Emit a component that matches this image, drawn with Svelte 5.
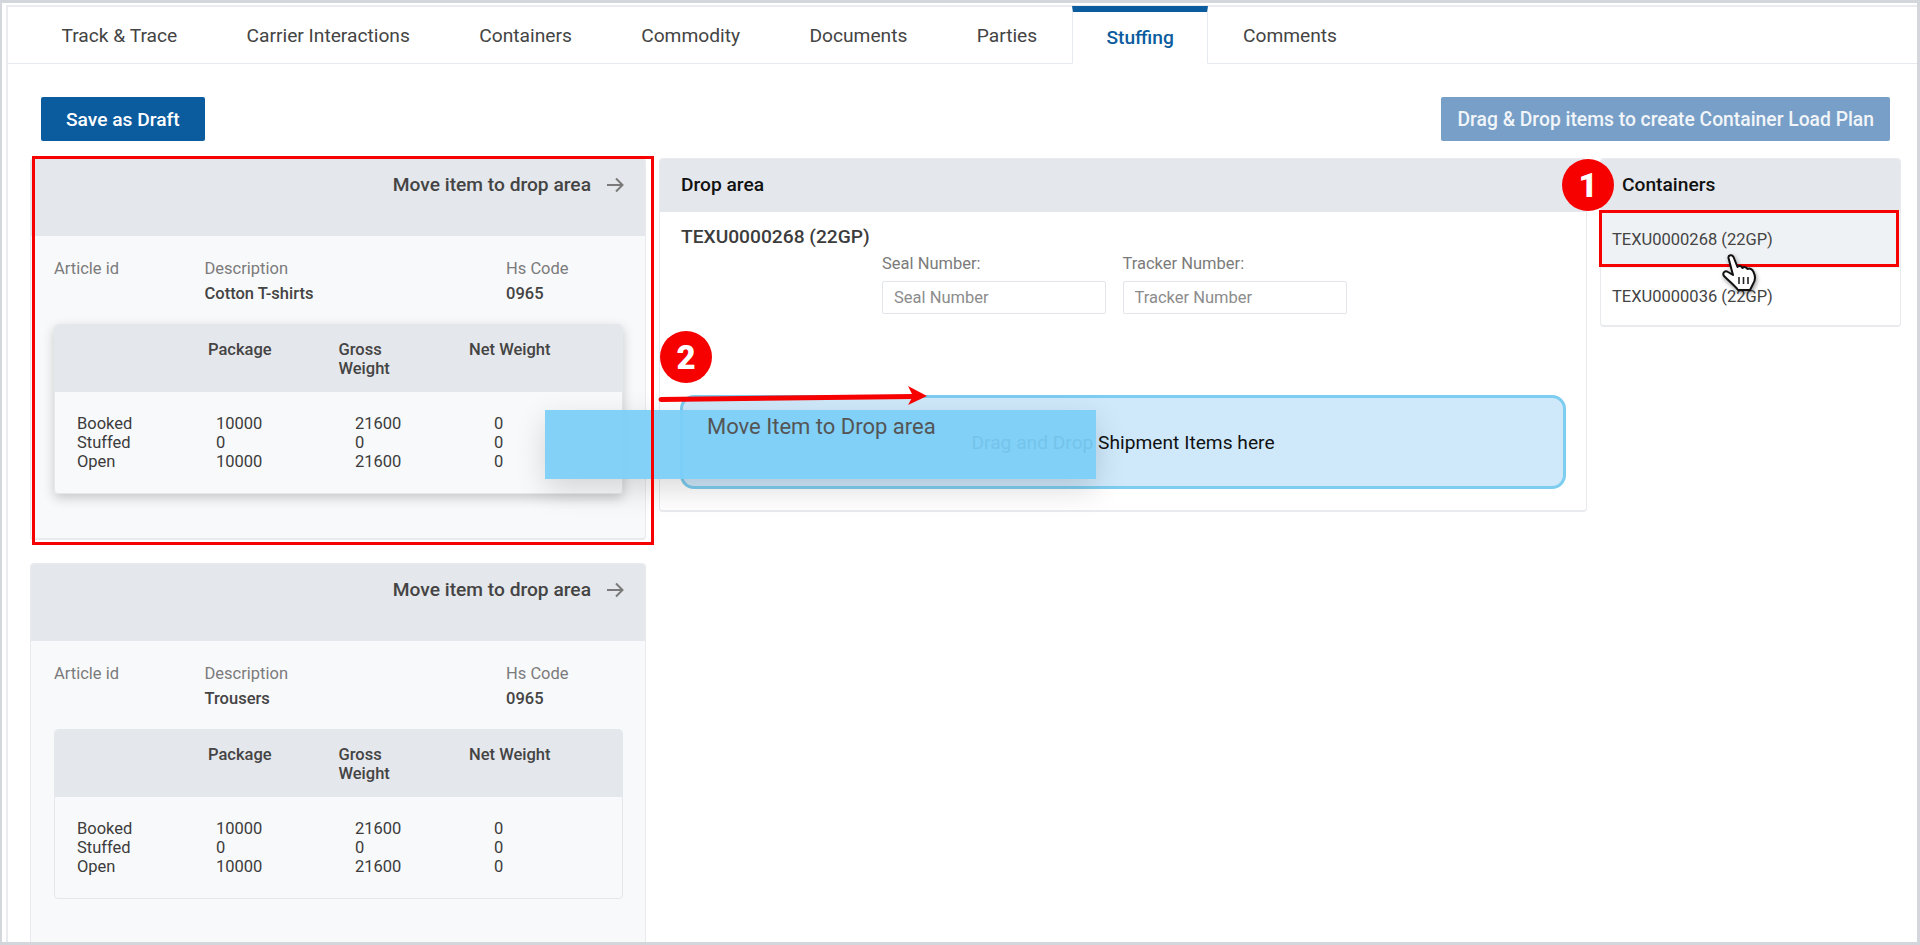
<script>
  const tabs = ['Track & Trace', 'Carrier Interactions', 'Containers', 'Commodity', 'Documents', 'Parties', 'Stuffing', 'Comments']
  const items = [
    { name: 'Cotton T-shirts', hover: true },
    { name: 'Trousers', hover: false }
  ]
  const rows = [
    ['Booked', '10000', '21600', '0'],
    ['Stuffed', '0', '0', '0'],
    ['Open', '10000', '21600', '0']
  ]
</script>

<div class="frame">
  <div class="page">
    <div class="sheet">
      <nav class="tabs">
        {#each tabs as tab}
          <div class="tab" class:active={tab === 'Stuffing'}>{tab}</div>
        {/each}
      </nav>

      <div class="toolbar">
        <button class="btn">Save as Draft</button>
        <button class="btn hint">Drag &amp; Drop items to create Container Load Plan</button>
      </div>

      <div class="columns">
        <div class="items">
          {#each items as item}
            <section class="card">
              <header class="card-head">
                <span>Move item to drop area</span>
                <svg width="18" height="16" viewBox="0 0 18 16" fill="none" stroke="#7a7a7a" stroke-width="2">
                  <path d="M1 8h15.5M10 1.5 16.5 8 10 14.5" />
                </svg>
              </header>
              <div class="card-body">
                <div class="meta">
                  <div class="label">Article id</div>
                  <div class="label">Description</div>
                  <div class="label">Hs Code</div>
                  <div></div>
                  <div class="value">{item.name}</div>
                  <div class="value">0965</div>
                </div>
                <div class="qty" class:lifted={item.hover}>
                  <div class="qty-head">
                    <span>Package</span>
                    <span>Gross<br />Weight</span>
                    <span>Net Weight</span>
                  </div>
                  <div class="qty-rows">
                    {#each rows as row}
                      {#each row as cell}
                        <span>{cell}</span>
                      {/each}
                    {/each}
                  </div>
                </div>
              </div>
            </section>
          {/each}
        </div>

        <section class="panel drop">
          <header class="panel-head">Drop area</header>
          <div class="drop-body">
            <div class="container-title">TEXU0000268 (22GP)</div>
            <div class="fields">
              <label>
                Seal Number:
                <input placeholder="Seal Number" />
              </label>
              <label>
                Tracker Number:
                <input placeholder="Tracker Number" />
              </label>
            </div>
            <div class="dropzone">Drag and Drop Shipment Items here</div>
          </div>
        </section>

        <section class="panel list">
          <header class="panel-head">Containers</header>
          <div class="list-item selected">TEXU0000268 (22GP)</div>
          <div class="list-item">TEXU0000036 (22GP)</div>
        </section>
      </div>
    </div>
  </div>

  <!-- dragged item and tutorial marks sit on top of the page -->
  <div class="ghost">Move Item to Drop area</div>
  <div class="mark mark-card"></div>
  <div class="mark mark-item"></div>
  <div class="step step-1">1</div>
  <div class="step step-2">2</div>
  <svg class="arrow" width="280" height="30" viewBox="0 0 280 30">
    <path d="M6 14.5 258 11.5" stroke="#f60000" stroke-width="5" stroke-linecap="round" fill="none" />
    <path d="M272 11 253 1 258 11 253 20Z" fill="#f60000" />
  </svg>
  <svg class="hand" width="36" height="40" viewBox="0 0 36 40">
    <path
      d="M6.5 4C6 1 10 0 11.500 3L15.500 13C17 11 19.500 12 20.500 14C22 12.500 24.500 13 25.500 15C27.500 14 30.500 15 31.500 18C33.500 22 33 27 31 30L28 36H16C13 32 8 28 2 22C0 19 3 16 6 18L11 21Z"
      fill="#fff"
      stroke="#111"
      stroke-width="2"
      stroke-linejoin="round"
    />
    <path d="M17 23v7M21.500 23v7M26 23v7" stroke="#222" stroke-width="1.600" fill="none" />
  </svg>
</div>

<style>
  :global(body) {
    margin: 0;
    background: #fff;
  }

  .frame {
    position: relative;
    box-sizing: border-box;
    height: 945px;
    overflow: hidden;
    padding: 3px 3px 3px 2px;
    background: #d3d7db;
    font-family: Roboto, "Liberation Sans", sans-serif;
    color: #3c3c3c;
  }

  .page {
    box-sizing: border-box;
    height: 100%;
    padding: 2px 0 0 4px;
    background: #fff;
    overflow: hidden;
  }

  .sheet {
    height: 100%;
    border-top: 2px solid #e9ebef;
    border-left: 2px solid #e9ebef;
  }

  .tabs {
    display: flex;
    height: 57px;
    padding-left: 18.800px;
    box-sizing: border-box;
    border-bottom: 1px solid #e6e9ed;
    font-size: 19.200px;
  }

  .tab {
    display: flex;
    align-items: center;
    padding: 0 34.700px;
    color: #444;
  }

  .tab.active {
    margin: -1px 0 -1px;
    padding: 0 33.500px;
    border: 1px solid #e6e9ed;
    border-top: 6px solid #0b5c9e;
    border-bottom-color: #fff;
    color: #0b5c9e;
    font-weight: 500;
  }

  .toolbar {
    display: flex;
    justify-content: space-between;
    padding: 33px 27px 0 33px;
  }

  .btn {
    height: 44px;
    padding: 0 25px;
    border: 0;
    border-radius: 2px;
    background: #0b5c9e;
    color: #fff;
    font: 500 19.200px Roboto, sans-serif;
  }

  .btn.hint {
    padding: 0 16px;
    background: #779fc7;
    color: #f1f5f9;
    font-size: 19.300px;
  }

  .columns {
    display: grid;
    grid-template-columns: 616px 928px 301px;
    column-gap: 13px;
    align-items: start;
    padding: 17px 0 0 22px;
  }

  .items {
    display: flex;
    flex-direction: column;
    gap: 23px;
  }

  .card {
    box-sizing: border-box;
    height: 382px;
    flex: none;
    border: 1px solid #e8eaee;
    border-bottom-width: 2px;
    border-radius: 4px;
    background: #f8f9fb;
    overflow: hidden;
  }

  .card-head {
    display: flex;
    justify-content: flex-end;
    align-items: flex-start;
    gap: 15px;
    box-sizing: border-box;
    height: 77px;
    padding: 15px 21px 0 0;
    background: #e4e7eb;
    color: #444;
    font-size: 19.200px;
    font-weight: 500;
    line-height: 22px;
  }

  .card-head svg {
    margin-top: 3px;
  }

  .card-body {
    padding: 23px 22px 0 23px;
    font-size: 16.500px;
    line-height: 19.200px;
  }

  .meta {
    display: grid;
    grid-template-columns: 150.500px 301.500px 1fr;
    align-content: start;
    row-gap: 6px;
    height: 65px;
  }

  .label {
    color: #7b7b7b;
  }

  .value {
    font-weight: 500;
    color: #444;
  }

  .qty {
    box-sizing: border-box;
    height: 170px;
    border: 1px solid #e4e7eb;
    border-radius: 4px;
    overflow: hidden;
  }

  .qty.lifted {
    box-shadow: 0 4px 12px rgba(0, 0, 0, 0.2);
  }

  .qty-head {
    display: grid;
    grid-template-columns: 130.500px 130.500px 1fr;
    box-sizing: border-box;
    height: 67px;
    padding: 15px 0 0 153px;
    background: #e4e7eb;
    font-weight: 500;
    color: #444;
  }

  .qty-rows {
    display: grid;
    grid-template-columns: repeat(3, 139px) 1fr;
    padding: 22px 0 0 22px;
  }

  .panel {
    box-sizing: border-box;
    border: 1px solid #e8eaee;
    border-bottom-width: 2px;
    border-radius: 4px;
    background: #fff;
    overflow: hidden;
  }

  .panel-head {
    box-sizing: border-box;
    height: 52px;
    padding: 15px 0 0 21px;
    background: #e4e7eb;
    color: #111;
    font-size: 19.200px;
    font-weight: 500;
    line-height: 22px;
  }

  .drop {
    height: 354px;
  }

  .drop .panel-head {
    height: 53px;
  }

  .drop-body {
    padding: 14px 20px 0 21px;
  }

  .container-title {
    font-size: 19.200px;
    font-weight: 500;
    line-height: 22px;
  }

  .fields {
    display: flex;
    gap: 16.500px;
    padding-left: 201px;
    margin-top: 6px;
  }

  label {
    display: flex;
    flex-direction: column;
    gap: 8px;
    width: 224px;
    color: #7b7b7b;
    font-size: 16.500px;
    line-height: 19px;
  }

  input {
    box-sizing: border-box;
    width: 100%;
    height: 33px;
    padding: 0 11px;
    border: 1px solid #e2e5e9;
    border-radius: 2px;
    font: 16.500px Roboto, sans-serif;
    outline: none;
  }

  input::placeholder {
    color: #8c8c8c;
    opacity: 1;
  }

  .dropzone {
    display: flex;
    align-items: center;
    justify-content: center;
    box-sizing: border-box;
    height: 94px;
    width: 886px;
    margin: 81px 0 0 -1px;
    border: 3px solid #7dcdf0;
    border-radius: 14px;
    background: #cfe9fb;
    color: #111;
    font-size: 19.200px;
  }

  .list {
    height: 169px;
  }

  .list .panel-head {
    padding-left: 21px;
  }

  .list-item {
    display: flex;
    align-items: center;
    height: 57px;
    padding-left: 11px;
    font-size: 16.500px;
    color: #444;
  }

  .list-item.selected {
    background: #eff2f5;
  }

  .ghost {
    position: absolute;
    left: 545px;
    top: 410px;
    box-sizing: border-box;
    width: 551px;
    height: 69px;
    padding: 4px 0 0 162px;
    background: rgba(123, 206, 246, 0.94);
    box-shadow: 0 10px 30px rgba(0, 0, 0, 0.15);
    color: #555;
    font-size: 22px;
    line-height: 26px;
  }

  .mark {
    position: absolute;
    box-sizing: border-box;
    border: 3px solid #f60000;
  }

  .mark-card {
    left: 32px;
    top: 156px;
    width: 622px;
    height: 389px;
  }

  .mark-item {
    left: 1599px;
    top: 210px;
    width: 300px;
    height: 57px;
  }

  .step {
    position: absolute;
    display: flex;
    align-items: center;
    justify-content: center;
    width: 52px;
    height: 52px;
    border-radius: 50%;
    background: #f60000;
    color: #fff;
    font-size: 33px;
    font-weight: 900;
  }

  .step-1 {
    left: 1562px;
    top: 159px;
  }

  .step-2 {
    left: 660px;
    top: 331px;
  }

  .arrow {
    position: absolute;
    left: 655px;
    top: 385px;
  }

  .hand {
    position: absolute;
    left: 1722px;
    top: 254px;
    filter: drop-shadow(1px 2px 2px rgba(0, 0, 0, 0.4));
  }
</style>
